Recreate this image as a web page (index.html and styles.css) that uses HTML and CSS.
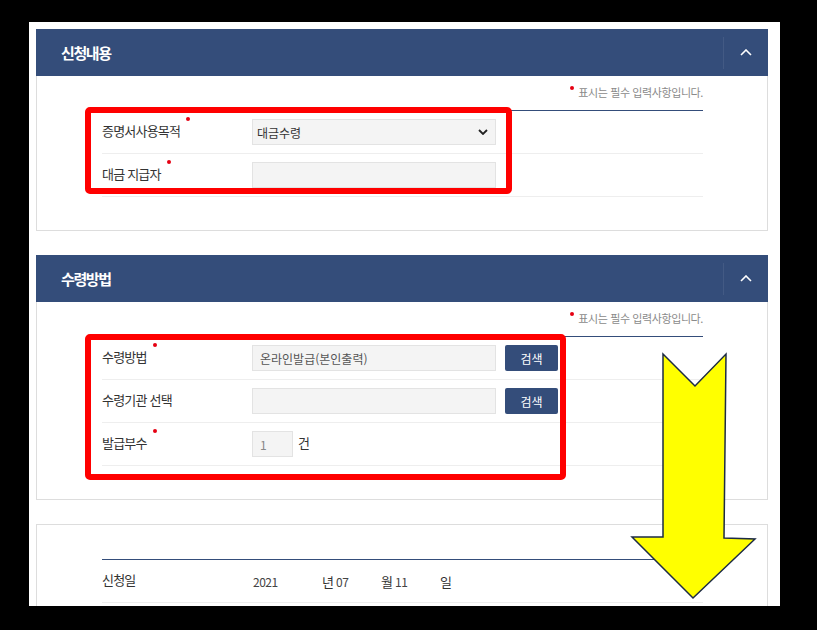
FILE: index.html
```html
<!DOCTYPE html>
<html lang="ko">
<head>
    <meta charset="UTF-8">
    <meta name="viewport" content="width=device-width, initial-scale=1.0">
    <title>증명서 발급 신청</title>
    <link rel="stylesheet" href="styles.css">
</head>
<body>
    <div class="page">
        <section class="panel">
            <div class="panel-head">
                <h2>신청내용</h2>
                <button class="fold" type="button" aria-label="접기">
                    <svg width="12" height="7" viewBox="0 0 12 7"><path d="M1 6 L6 1 L11 6" fill="none" stroke="#fff" stroke-width="1.6"/></svg>
                </button>
            </div>
            <div class="panel-body">
                <p class="req-note"><span class="dot"></span>표시는 필수 입력사항입니다.</p>
                <div class="form-table">
                    <div class="row">
                        <span class="label req">증명서사용목적</span>
                        <div class="select-wrap">
                            <select class="input select">
                                <option>대금수령</option>
                            </select>
                            <svg class="caret" width="10" height="6" viewBox="0 0 10 6"><path d="M1 1 L5 5 L9 1" fill="none" stroke="#222" stroke-width="1.8"/></svg>
                        </div>
                    </div>
                    <div class="row">
                        <span class="label req">대금 지급자</span>
                        <input class="input" type="text" value="">
                    </div>
                </div>
            </div>
        </section>

        <section class="panel">
            <div class="panel-head">
                <h2>수령방법</h2>
                <button class="fold" type="button" aria-label="접기">
                    <svg width="12" height="7" viewBox="0 0 12 7"><path d="M1 6 L6 1 L11 6" fill="none" stroke="#fff" stroke-width="1.6"/></svg>
                </button>
            </div>
            <div class="panel-body">
                <p class="req-note"><span class="dot"></span>표시는 필수 입력사항입니다.</p>
                <div class="form-table">
                    <div class="row">
                        <span class="label req">수령방법</span>
                        <input class="input" type="text" value="온라인발급(본인출력)" readonly>
                        <button class="btn" type="button">검색</button>
                    </div>
                    <div class="row">
                        <span class="label">수령기관 선택</span>
                        <input class="input" type="text" value="" readonly>
                        <button class="btn" type="button">검색</button>
                    </div>
                    <div class="row">
                        <span class="label req">발급부수</span>
                        <input class="input qty" type="text" value="1" readonly>
                        <span class="unit">건</span>
                    </div>
                </div>
            </div>
        </section>

        <section class="panel">
            <div class="panel-body boxed">
                <p class="req-note"></p>
                <div class="form-table">
                    <div class="row">
                        <span class="label">신청일</span>
                        <div class="date">
                            <span class="num year">2021</span>
                            <span class="date-unit">년</span>
                            <span class="num">07</span>
                            <span class="date-unit">월</span>
                            <span class="num">11</span>
                            <span class="date-unit">일</span>
                        </div>
                    </div>
                </div>
            </div>
        </section>
    </div>

    <div class="mark mark-purpose"></div>
    <div class="mark mark-receive"></div>
    <svg class="arrow" width="817" height="630" viewBox="0 0 817 630">
        <polygon points="663,354 695,386 726,354 724,538 755,539 693,598 632,537 663,537" fill="#ffff00" stroke="#1d2b45" stroke-width="1.5" stroke-linejoin="miter"/>
    </svg>
</body>
</html>
```

FILE: styles.css
```css
body {
    margin: 0;
    background: #000;
    font-family: "Noto Sans CJK KR", "Noto Sans", sans-serif;
    color: #333;
}

.page {
    width: 751px;
    height: 584px;
    margin: 22px 0 0 29px;
    padding: 7px 12px 0 7px;
    box-sizing: border-box;
    background: #fff;
    overflow: hidden;
}

.panel + .panel {
    margin-top: 24px;
}

.panel-head {
    display: flex;
    align-items: center;
    height: 47px;
    padding-left: 25px;
    background: #344d7a;
}

.panel-head h2 {
    flex: 1;
    margin: 0;
    font-size: 15px;
    font-weight: 700;
    color: #fff;
    letter-spacing: -1.4px;
}

.fold {
    display: flex;
    align-items: center;
    justify-content: center;
    width: 45px;
    height: 32px;
    padding: 0;
    border: 0;
    border-left: 1px solid rgba(255, 255, 255, 0.08);
    background: none;
}

.panel-body {
    border: 1px solid #ddd;
    border-top: 0;
    padding: 0 64px 33px 65px;
}

.panel-body.boxed {
    border-top: 1px solid #ddd;
}

.req-note {
    margin: 0;
    height: 34px;
    box-sizing: border-box;
    padding-top: 9px;
    text-align: right;
    font-size: 11px;
    line-height: 14px;
    color: #8a8a8a;
    letter-spacing: -0.4px;
}

.req-note .dot,
.label.req::after {
    display: inline-block;
    width: 4px;
    height: 4px;
    border-radius: 50%;
    background: #e60012;
}

.req-note .dot {
    margin-right: 4px;
    vertical-align: 7px;
}

.form-table {
    border-top: 1px solid #344d7a;
}

.row {
    display: flex;
    align-items: center;
    height: 43px;
    box-sizing: border-box;
    border-bottom: 1px solid #eee;
}

.label {
    width: 150px;
    flex-shrink: 0;
    padding-bottom: 3px;
    font-size: 13px;
    line-height: 19px;
    color: #333;
    letter-spacing: -0.8px;
}

.label.req::after {
    content: "";
    margin: -4px 0 0 6px;
    vertical-align: top;
}

.input {
    width: 244px;
    height: 26px;
    box-sizing: border-box;
    padding: 0 7px;
    border: 1px solid #e3e3e3;
    border-radius: 0;
    background: #f4f4f4;
    font-family: inherit;
    font-size: 12px;
    color: #555;
    letter-spacing: 0;
    outline: none;
}

.select-wrap {
    position: relative;
}

.select {
    display: block;
    appearance: none;
    -webkit-appearance: none;
    padding-left: 4px;
    color: #333;
}

.caret {
    position: absolute;
    right: 8px;
    top: 10px;
}

.btn {
    width: 53px;
    height: 26px;
    margin-left: 9px;
    padding: 0;
    border: 0;
    border-radius: 2px;
    background: #344d7a;
    font-family: inherit;
    font-size: 12px;
    color: #fff;
}

.qty {
    width: 41px;
    color: #888;
}

.unit {
    margin: -3px 0 0 5px;
    font-size: 13px;
    color: #333;
}

.date {
    display: flex;
    align-items: center;
    font-size: 12px;
}

.num {
    width: 45px;
    font-size: 12px;
    color: #444;
    letter-spacing: -0.5px;
}

.num.year {
    width: 69px;
    padding-left: 1px;
}

.date-unit {
    width: 14px;
    font-size: 13px;
    color: #333;
}

.mark {
    position: absolute;
    box-sizing: border-box;
    border: 6px solid #ff0000;
    border-radius: 5px;
}

.mark-purpose {
    left: 85px;
    top: 107px;
    width: 427px;
    height: 87px;
}

.mark-receive {
    left: 85px;
    top: 334px;
    width: 481px;
    height: 146px;
}

.arrow {
    position: absolute;
    left: 0;
    top: 0;
    pointer-events: none;
}
```
